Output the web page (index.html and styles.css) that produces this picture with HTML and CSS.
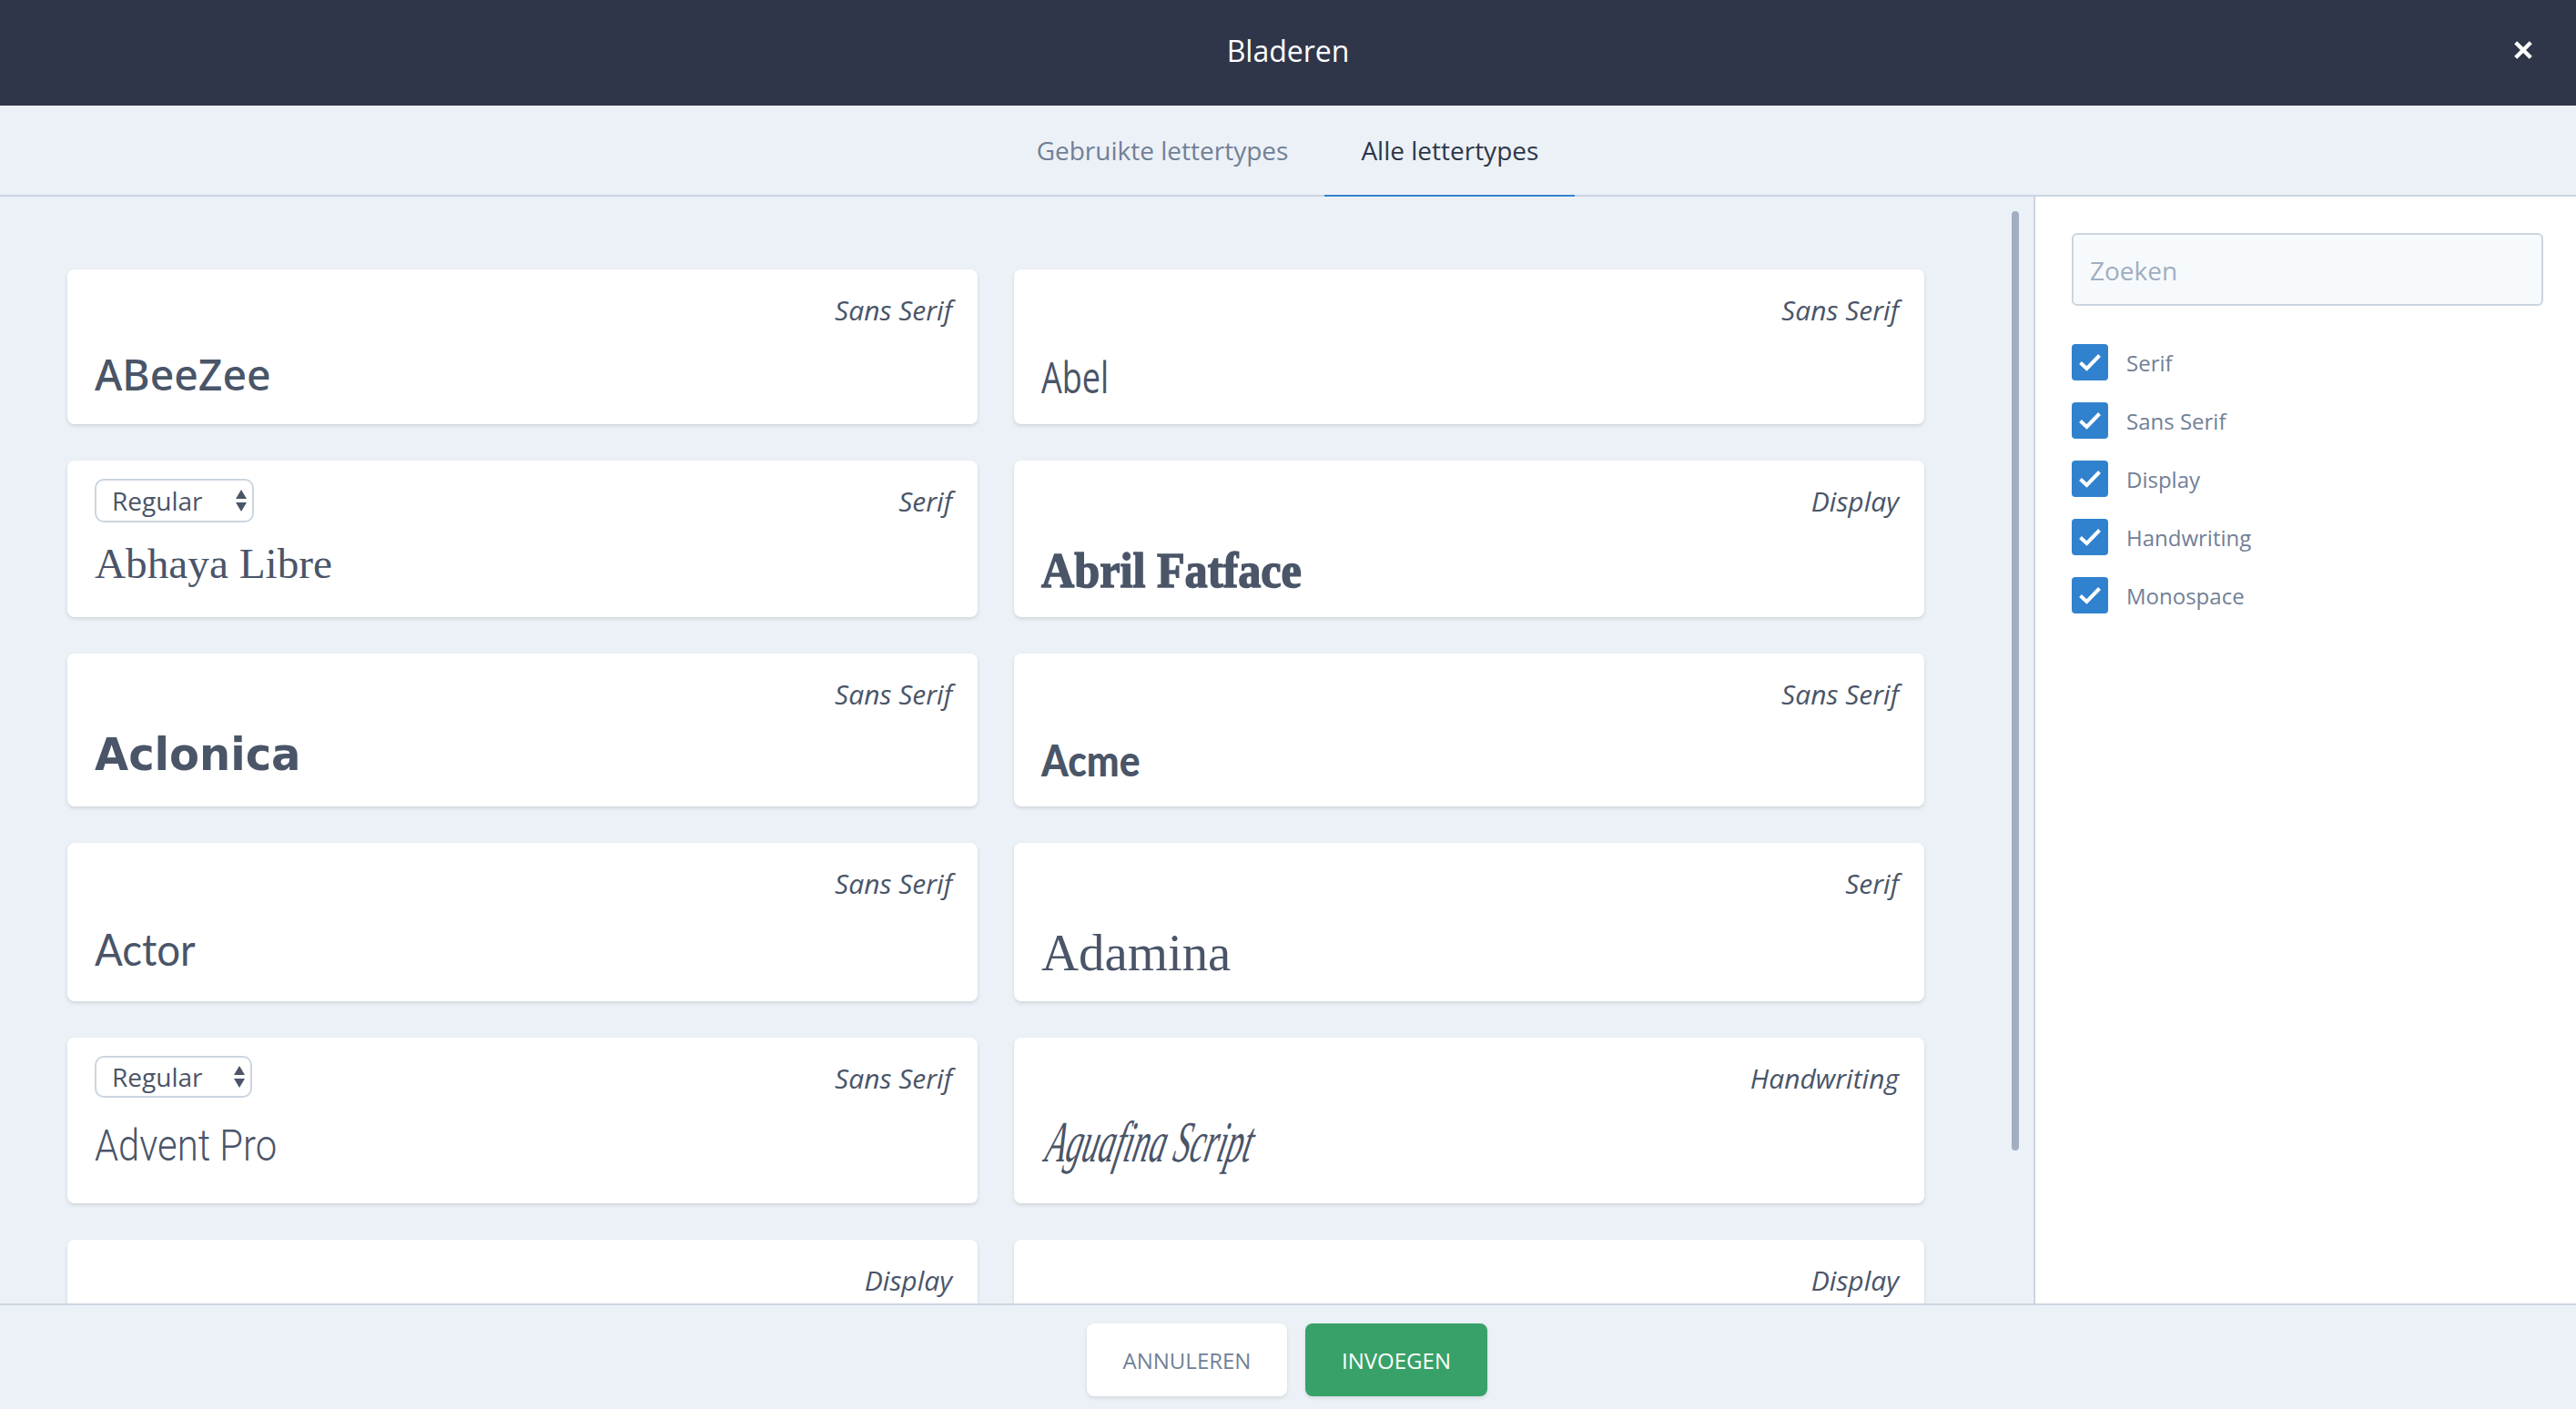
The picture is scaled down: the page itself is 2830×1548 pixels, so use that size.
FILE: index.html
```html
<!DOCTYPE html>
<html lang="nl">
<head>
<meta charset="utf-8">
<title>Bladeren</title>
<link rel="stylesheet" href="styles.css">
</head>
<body>
<div class="modal">
  <header class="topbar">
    <span></span>
    <h1 class="title">Bladeren</h1>
    <button class="close" aria-label="Sluiten">
      <svg viewBox="0 0 20 20" width="22" height="22"><path d="M2.5 2.5 17.5 17.5M17.5 2.5 2.5 17.5" fill="none" stroke="#fff" stroke-width="4"/></svg>
    </button>
  </header>
  <nav class="tabs">
    <a class="tab">Gebruikte lettertypes</a>
    <a class="tab tab-active">Alle lettertypes</a>
  </nav>
  <div class="content">
    <main class="pane">
      <div class="scrollbar"></div>
      <div class="grid">
        <article class="card pb38"><div class="card-top"><span class="type">Sans Serif</span></div><div class="name f-abeezee">ABeeZee</div></article>
        <article class="card pb38"><div class="card-top"><span class="type">Sans Serif</span></div><div class="name f-abel">Abel</div></article>

        <article class="card pb45"><div class="card-top"><div class="select"><span>Regular</span><svg viewBox="0 0 14 26" width="14" height="26"><path d="M7 1 13 11H1ZM7 25 1 15H13Z" fill="#4a5568"/></svg></div><span class="type">Serif</span></div><div class="name f-abhaya">Abhaya Libre</div></article>
        <article class="card pb34"><div class="card-top"><span class="type">Display</span></div><div class="name f-abril">Abril Fatface</div></article>

        <article class="card pb40"><div class="card-top"><span class="type">Sans Serif</span></div><div class="name f-aclonica">Aclonica</div></article>
        <article class="card pb34"><div class="card-top"><span class="type">Sans Serif</span></div><div class="name f-acme">Acme</div></article>

        <article class="card pb40"><div class="card-top"><span class="type">Sans Serif</span></div><div class="name f-actor">Actor</div></article>
        <article class="card pb33"><div class="card-top"><span class="type">Serif</span></div><div class="name f-adamina">Adamina</div></article>

        <article class="card pb49"><div class="card-top"><div class="select select-small"><span>Regular</span><svg viewBox="0 0 14 26" width="14" height="26"><path d="M7 1 13 11H1ZM7 25 1 15H13Z" fill="#4a5568"/></svg></div><span class="type">Sans Serif</span></div><div class="name f-advent">Advent Pro</div></article>
        <article class="card pb49"><div class="card-top"><span class="type">Handwriting</span></div><div class="name f-aguafina">Aguafina Script</div></article>

        <article class="card pb38"><div class="card-top"><span class="type">Display</span></div></article>
        <article class="card pb38"><div class="card-top"><span class="type">Display</span></div></article>
      </div>
    </main>
    <aside class="side">
      <input class="search" type="text" placeholder="Zoeken">
      <ul class="filters">
        <li class="filter"><span class="box"><svg viewBox="0 0 26 22" width="26" height="22"><path d="M2.5 11.5 9.5 18 23.5 3.5" fill="none" stroke="#fff" stroke-width="4"/></svg></span>Serif</li>
        <li class="filter"><span class="box"><svg viewBox="0 0 26 22" width="26" height="22"><path d="M2.5 11.5 9.5 18 23.5 3.5" fill="none" stroke="#fff" stroke-width="4"/></svg></span>Sans Serif</li>
        <li class="filter"><span class="box"><svg viewBox="0 0 26 22" width="26" height="22"><path d="M2.5 11.5 9.5 18 23.5 3.5" fill="none" stroke="#fff" stroke-width="4"/></svg></span>Display</li>
        <li class="filter"><span class="box"><svg viewBox="0 0 26 22" width="26" height="22"><path d="M2.5 11.5 9.5 18 23.5 3.5" fill="none" stroke="#fff" stroke-width="4"/></svg></span>Handwriting</li>
        <li class="filter"><span class="box"><svg viewBox="0 0 26 22" width="26" height="22"><path d="M2.5 11.5 9.5 18 23.5 3.5" fill="none" stroke="#fff" stroke-width="4"/></svg></span>Monospace</li>
      </ul>
    </aside>
  </div>
  <footer class="footer">
    <button class="btn btn-cancel">ANNULEREN</button>
    <button class="btn btn-ok">INVOEGEN</button>
  </footer>
</div>
</body>
</html>
```
FILE: styles.css
```css
* { box-sizing: border-box; }
html, body { margin: 0; height: 100%; }
body { font-family: "Open Sans", "Noto Sans", sans-serif; color: #4a5568; background: #ecf1f7; overflow: hidden; }
.modal { height: 100vh; display: flex; flex-direction: column; }

.topbar { height: 116px; flex: none; background: #2f3649; display: grid; grid-template-columns: 1fr auto 1fr; align-items: center; }
.title { margin: 0; font-size: 32px; font-weight: 400; color: #fff; line-height: 112px; height: 116px; }
.close { justify-self: end; margin: 0 47px 6px 0; padding: 0; border: 0; background: none; display: flex; }

.tabs { height: 100px; flex: none; display: flex; justify-content: center; border-bottom: 2px solid #cbd5e0; padding-right: 1px; }
.tab { height: 100px; padding: 0 40px; font-size: 28px; line-height: 98px; color: #718096; }
.tab-active { color: #2d3748; border-bottom: 2px solid #3182ce; }

.content { flex: 1; min-height: 0; display: flex; }
.pane { position: relative; flex: 1; min-width: 0; overflow: hidden; padding: 80px 0 0 74px; }
.scrollbar { position: absolute; top: 16px; left: 2210px; width: 8px; height: 1032px; border-radius: 4px; background: #a0aec0; }
.grid { width: 2040px; display: grid; grid-template-columns: 1000px 1000px; grid-template-rows: 170px 172px 168px 174px 182px 172px; gap: 40px; }

.card { display: flex; flex-direction: column; justify-content: space-between; background: #fff; border-radius: 8px; padding: 20px 28px 0 30px; box-shadow: 0 2px 4px rgba(0,0,0,.12); }
.pb33 { padding-bottom: 33px; }
.pb34 { padding-bottom: 34px; }
.pb38 { padding-bottom: 38px; }
.pb40 { padding-bottom: 40px; }
.pb45 { padding-bottom: 45px; }
.pb49 { padding-bottom: 49px; }
.card-top { display: flex; align-items: flex-start; justify-content: space-between; min-height: 48px; }
.card-top .type:only-child { margin-left: auto; }
.type { font-size: 30px; font-style: italic; line-height: 50px; color: #4a5568; }

.select { width: 175px; height: 48px; display: flex; align-items: center; justify-content: space-between; padding: 0 5px 0 17px; border: 2px solid #cbd5e0; border-radius: 10px; font-size: 28px; color: #4a5568; background: #fff; }
.select-small { width: 173px; height: 46px; }

.name { width: max-content; line-height: 1; white-space: nowrap; color: #4a5568; transform-origin: left bottom; height: 0; display: flex; align-items: flex-end; }
.f-abeezee { font-family: "Noto Sans", sans-serif; font-weight: 500; font-size: 48px; transform: translateY(7px) scaleX(.965); }
.f-abel { font-family: "Open Sans", sans-serif; font-weight: 400; font-size: 48px; transform: translateY(10px) scaleX(.75); }
.f-abhaya { font-family: "Liberation Serif", serif; font-size: 47px; transform: translateY(10px) scaleX(1.005); }
.f-abril { font-family: "Liberation Serif", serif; font-weight: 700; font-size: 54px; -webkit-text-stroke: 1.5px #4a5568; transform: translateY(10px) scaleX(.93); }
.f-aclonica { font-family: "DejaVu Sans", sans-serif; font-weight: 700; font-size: 50px; transform: translateY(8px) scaleX(.96); }
.f-acme { font-family: "Lato", sans-serif; font-weight: 900; font-size: 48px; transform: translateY(7px) scaleX(.886); }
.f-actor { font-family: "Lato", sans-serif; font-size: 48px; transform: translateY(7px) scaleX(.95); }
.f-adamina { font-family: "Liberation Serif", serif; font-size: 58px; transform: translateY(9px) scaleX(.98); }
.f-advent { font-family: "Roboto", sans-serif; font-weight: 300; font-size: 48px; transform: translateY(10px) scaleX(.87); }
.f-aguafina { font-family: "Liberation Serif", serif; font-style: italic; font-size: 64px; transform: translateY(14px) scaleX(.56) skewX(-22deg); }

.side { flex: none; width: 596px; background: #fff; border-left: 2px solid #cbd5e0; padding: 40px 36px 0 40px; }
.search { display: block; width: 100%; height: 80px; padding: 2px 18px 0; border: 2px solid #cbd5e0; border-radius: 6px; background: #f7fafc; font: 400 28px "Open Sans", sans-serif; color: #4a5568; outline: none; }
.search::placeholder { color: #a0aec0; opacity: 1; }
.filters { list-style: none; margin: 42px 0 0; padding: 0; display: flex; flex-direction: column; gap: 24px; }
.filter { height: 40px; display: flex; align-items: center; gap: 20px; font-size: 24px; color: #718096; }
.box { width: 40px; height: 40px; display: flex; align-items: center; justify-content: center; border-radius: 4px; background: #3182ce; }

.footer { height: 116px; flex: none; background: #ecf1f7; border-top: 2px solid #cbd5e0; display: flex; justify-content: center; align-items: flex-start; gap: 20px; padding: 20px 2px 0 0; }
.btn { height: 80px; border: 0; border-radius: 8px; font: 400 24px "Open Sans", sans-serif; box-shadow: 0 2px 4px rgba(0,0,0,.1); }
.btn-cancel { width: 220px; background: #fff; color: #718096; }
.btn-ok { width: 200px; background: #38a169; color: #fff; }
```
